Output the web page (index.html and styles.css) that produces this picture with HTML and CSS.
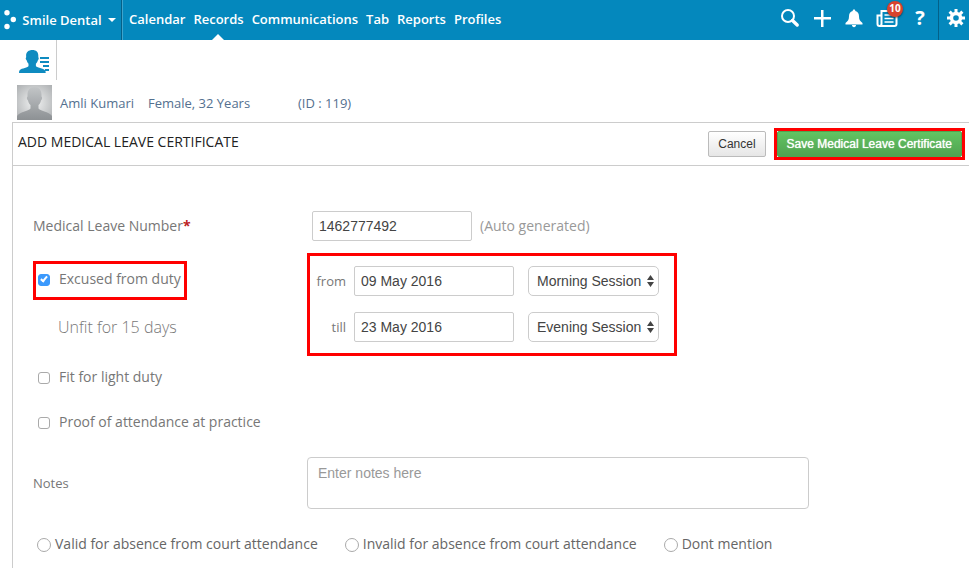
FILE: index.html
```html
<!DOCTYPE html>
<html lang="en">
<head>
  <meta charset="UTF-8" />
  <meta name="viewport" content="width=device-width, initial-scale=1" />
  <title>Add Medical Leave Certificate</title>
  <link rel="stylesheet" href="styles.css">
</head>
<body>
  <header class="topbar">
    <button type="button" class="brand">
      <svg class="brand-dots" width="12" height="20" viewBox="0 0 12 20" fill="#fff">
        <circle cx="3" cy="2.700" r="2.700" />
        <circle cx="9.300" cy="9.500" r="2.700" />
        <circle cx="3" cy="16.500" r="2.700" />
      </svg>
      <span>Smile Dental</span>
      <svg width="8" height="4" viewBox="0 0 8 4" fill="#fff"><path d="M0 0h8L4 4z" /></svg>
    </button>

    <nav class="menu">
      <a href="#">Calendar</a>
      <a href="#" class="active">Records</a>
      <a href="#">Communications</a>
      <a href="#">Tab</a>
      <a href="#">Reports</a>
      <a href="#">Profiles</a>
    </nav>

    <div class="tools">
      <button type="button" aria-label="Search">
        <svg width="20" height="20" viewBox="0 0 20 20" fill="none" stroke="#fff">
          <circle cx="8" cy="8" r="6" stroke-width="2" />
          <path d="M12.500 12.500l4.700 4.500" stroke-width="3.400" stroke-linecap="round" />
        </svg>
      </button>
      <button type="button" aria-label="Add">
        <svg width="20" height="20" viewBox="0 0 20 20" fill="#fff"><path d="M9 2h2.500v7H19v2.500h-7.500V19H9v-7.500H2V9h7z" /></svg>
      </button>
      <button type="button" aria-label="Alerts">
        <svg width="20" height="20" viewBox="0 0 20 20" fill="#fff">
          <path d="M10 1.500c.8 0 1.300.500 1.300 1.400C14 3.600 15 5.600 15 8.200c0 3.400 1 4.800 3.500 6.800v1.500h-17V15C4 13 5 11.600 5 8.200c0-2.600 1-4.600 3.700-5.300 0-.9.500-1.400 1.300-1.400z" />
          <path d="M8 17h4c0 1.300-.8 2.200-2 2.200s-2-.9-2-2.200z" />
        </svg>
      </button>
      <button type="button" class="news" aria-label="News">
        <svg width="22" height="20" viewBox="0 0 22 20" fill="none" stroke="#fff" stroke-width="2">
          <path d="M5.500 16V3h15v13a2 2 0 0 1-2 2h-15a2 2 0 0 1-2-2V7.500h4V16a2 2 0 0 1-2 2" />
          <path d="M8.500 7h9M8.500 10.500h9M8.500 14h9" stroke-width="1.700" />
        </svg>
        <span class="badge">10</span>
      </button>
      <button type="button" class="help" aria-label="Help">?</button>
    </div>

    <button type="button" class="settings" aria-label="Settings">
      <svg width="20" height="20" viewBox="0 0 20 20" fill="none" stroke="#fff">
        <circle cx="10" cy="10" r="4.500" stroke-width="3.400" />
        <path d="M10 1v4M10 15v4M1 10h4M15 10h4M3.600 3.600l3 3M13.400 13.400l3 3M3.600 16.400l3-3M13.400 6.600l3-3" stroke-width="3" />
      </svg>
    </button>
  </header>

  <div class="tabs">
    <a href="#" class="tab" aria-label="Patient details">
      <svg width="30" height="24" viewBox="0 0 30 24" fill="#0f8bc0">
        <path d="M13.500 0c3.800 0 5.800 2.200 5.800 5.500 0 .8 0 1.200.1 2 .6.600.4 2-.5 2.700-.4 1.600-1.100 2.700-2 3.500v2.300c0 1.200 8 2.500 9.300 4.500.4.700.5 1.600.5 2.500H0c0-1.200.2-2.300.8-3 1.700-1.700 8.700-2.500 8.700-4v-2.300c-.9-.8-1.500-2-1.900-3.500-.9-.7-1.200-2.200-.500-2.700.2-.8 0-1.200 0-2C7.100 2.200 9.500 0 13.500 0z" />
        <path d="M21 7h9v2h-9zM21 11h9v2h-9zM24 15h6v2h-6zM26 19h4v2h-4z" />
      </svg>
    </a>
  </div>

  <div class="patient">
    <svg class="avatar" width="35" height="35" viewBox="0 0 35 35">
      <defs>
        <radialGradient id="back" cx="50%" cy="50%" r="70%">
          <stop offset="0" stop-color="#f2f3f3" />
          <stop offset="1" stop-color="#adb0b2" />
        </radialGradient>
        <linearGradient id="person" x1="0" y1="0" x2="0" y2="1">
          <stop offset="0" stop-color="#c2c5c7" />
          <stop offset="1" stop-color="#8d9194" />
        </linearGradient>
      </defs>
      <path fill="url(#back)" d="M0 0h35v35H0z" />
      <path fill="url(#person)" d="M17.500 2c4.500 0 7 3 7 7.500v2c1 .5.800 3-.5 4-.5 2-1.300 3.500-2.500 4.500v3.500c1 2.500 10.500 3 13.500 7.500v4H0v-4c3-4.500 12.500-5 13.500-7.500V20c-1.200-1-2-2.500-2.500-4.500-1.300-1-1.500-3.500-.5-4v-2c0-4.500 2.500-7.500 7-7.500z" />
    </svg>
    <span class="patient-name">Amli Kumari</span>
    <span class="patient-info">Female, 32 Years</span>
    <span>(ID : 119)</span>
  </div>

  <form class="panel">
    <div class="panel-head">
      <h1>ADD MEDICAL LEAVE CERTIFICATE</h1>
      <button type="button" class="btn">Cancel</button>
      <div class="marked">
        <button type="submit" class="btn btn-save">Save Medical Leave Certificate</button>
      </div>
    </div>

    <div class="fields">
      <div class="row">
        <label for="number">Medical Leave Number<b class="required">*</b></label>
        <div class="number">
          <input type="text" id="number" class="text" value="1462777492">
          <span class="hint">(Auto generated)</span>
        </div>
      </div>

      <div class="row duty">
        <div class="duty-left">
          <label class="check marked"><input type="checkbox" checked> Excused from duty</label>
          <p class="unfit">Unfit for 15 days</p>
        </div>
        <div class="dates marked">
          <label for="from">from</label>
          <input type="text" id="from" class="text" value="09 May 2016">
          <div class="select">
            <select aria-label="From session">
              <option>Morning Session</option>
              <option>Evening Session</option>
            </select>
            <svg width="7" height="12" viewBox="0 0 7 12" fill="#444"><path d="M3.500 0L7 5H0zM3.500 12L0 7h7z" /></svg>
          </div>
          <label for="till">till</label>
          <input type="text" id="till" class="text" value="23 May 2016">
          <div class="select">
            <select aria-label="Till session">
              <option>Evening Session</option>
              <option>Morning Session</option>
            </select>
            <svg width="7" height="12" viewBox="0 0 7 12" fill="#444"><path d="M3.500 0L7 5H0zM3.500 12L0 7h7z" /></svg>
          </div>
        </div>
      </div>

      <div class="checks">
        <label class="check"><input type="checkbox"> Fit for light duty</label>
        <label class="check"><input type="checkbox"> Proof of attendance at practice</label>
      </div>

      <div class="row">
        <label for="notes" class="notes-label">Notes</label>
        <textarea id="notes" placeholder="Enter notes here"></textarea>
      </div>

      <div class="radios">
        <label><input type="radio" name="court"> Valid for absence from court attendance</label>
        <label><input type="radio" name="court"> Invalid for absence from court attendance</label>
        <label><input type="radio" name="court"> Dont mention</label>
      </div>
    </div>
  </form>
</body>
</html>
```

FILE: styles.css
```css
* {
  box-sizing: border-box;
}

body {
  margin: 0;
  min-height: 100vh;
  display: flex;
  flex-direction: column;
  background: #fff;
  color: #777;
  font-family: "Open Sans", sans-serif;
  font-size: 14px;
  line-height: 20px;
}

svg {
  display: block;
  flex: none;
}

button,
input,
select,
textarea {
  margin: 0;
  font-family: "Liberation Sans", Arial, sans-serif;
}

/* top bar */
.topbar {
  display: flex;
  height: 40px;
  background: #0488bd;
  color: #fff;
  font-size: 13px;
  font-weight: 600;
}

.topbar button {
  display: flex;
  align-items: center;
  justify-content: center;
  padding: 0;
  border: 0;
  background: none;
  color: #fff;
  font: inherit;
  cursor: pointer;
}

.topbar .brand {
  gap: 6px;
  width: 122px;
  padding-right: 1px;
  border-right: 1px solid #046088;
}

.menu {
  display: flex;
  gap: 8px;
  padding-left: 6px;
  border-left: 1px solid #3fa4cc;
}

.menu a {
  position: relative;
  line-height: 39px;
  color: #fff;
  text-decoration: none;
}

.menu .active::after {
  content: "";
  position: absolute;
  bottom: 0;
  left: 50%;
  margin-left: -7px;
  border: 6px solid transparent;
  border-top: 0;
  border-bottom-color: #fff;
}

.tools {
  display: flex;
  gap: 12px;
  margin-left: auto;
  padding-right: 8px;
  padding-bottom: 4px;
}

.topbar .news {
  position: relative;
}

.badge {
  position: absolute;
  top: 1px;
  right: -5px;
  width: 16px;
  height: 16px;
  border-radius: 8px;
  background: #d8432e;
  box-shadow: 0 1px 2px rgba(0, 0, 0, 0.5);
  font-size: 10px;
  font-weight: 700;
  line-height: 15px;
}

.topbar .help {
  width: 20px;
  font-size: 20px;
  font-weight: 700;
}

.topbar .settings {
  width: 31px;
  padding: 0 0 4px 4px;
  border-left: 1px solid #046088;
}

/* patient */
.tabs {
  display: flex;
  height: 40px;
}

.tab {
  display: flex;
  align-items: center;
  width: 57px;
  padding: 4px 0 0 19px;
  border-right: 1px solid #ccc;
}

.patient {
  display: flex;
  align-items: center;
  padding: 5px 17px 2px;
  color: #54708f;
  font-size: 13px;
}

.patient-name {
  margin: 0 14px 0 8px;
}

.patient-info {
  width: 150px;
}

/* form */
.panel {
  flex: 1;
  margin-left: 12px;
  border: 1px solid #ccc;
  border-width: 1px 0 0 1px;
}

.panel-head {
  display: flex;
  align-items: center;
  gap: 8px;
  height: 43px;
  padding: 0 4px 0 5px;
  border-bottom: 1px solid #ccc;
}

.panel-head h1 {
  margin: 0 auto 4px 0;
  color: #222;
  font-size: 14px;
  font-weight: 400;
}

.marked {
  border: 3px solid #f00;
}

.btn {
  display: block;
  height: 26px;
  padding: 0 9px;
  border: 1px solid #bbb;
  border-radius: 2px;
  background: linear-gradient(#fff, #e6e6e6);
  color: #333;
  font-size: 12px;
  cursor: pointer;
}

.btn-save {
  border-color: #51a351;
  background: linear-gradient(#62c462, #51a351);
  color: #fff;
  text-shadow: 0 0 1px #fff;
}

.fields {
  padding: 45px 20px 10px;
}

.row {
  display: grid;
  grid-template-columns: 274px 1fr;
  align-items: center;
}

.required {
  color: #b22;
}

.number {
  display: flex;
  align-items: center;
  gap: 8px;
  padding-left: 5px;
}

.text {
  width: 160px;
  height: 30px;
  padding: 0 6px;
  border: 1px solid #ccc;
  border-radius: 2px;
  color: #444;
  font-size: 14px;
}

.hint {
  color: #999;
}

.duty {
  align-items: start;
  margin-top: 12px;
}

.duty-left {
  display: flex;
  flex-direction: column;
  align-items: flex-start;
  padding-top: 8px;
}

.check {
  display: flex;
  align-items: center;
  gap: 9px;
  padding-left: 5px;
}

.check.marked {
  height: 39px;
  padding: 0 3px 4px 2px;
}

.check input,
.radios input {
  position: relative;
  appearance: none;
  flex: none;
  width: 12px;
  height: 12px;
  margin-top: 2px;
  border: 1px solid #aaa;
  border-radius: 3px;
  background: #fff;
}

.check input:checked {
  border-color: #3b99fc;
  background: #3b99fc;
}

.check input:checked::after {
  content: "";
  position: absolute;
  top: 0;
  left: 3px;
  width: 2px;
  height: 5px;
  border: solid #fff;
  border-width: 0 2px 2px 0;
  transform: rotate(40deg);
}

.unfit {
  margin: 17px 0 0 25px;
  font-size: 16px;
  font-weight: 300;
}

.dates {
  display: grid;
  grid-template-columns: 36px 160px 137px;
  gap: 16px 8px;
  align-items: center;
  justify-self: start;
  padding: 10px 15px 11px 0;
}

.dates label {
  font-size: 13px;
  text-align: right;
}

.select {
  position: relative;
  margin-left: 6px;
}

.select select {
  appearance: none;
  display: block;
  width: 100%;
  height: 30px;
  padding: 0 8px;
  border: 1px solid #ccc;
  border-radius: 5px;
  background: #fff;
  color: #444;
  font-size: 14px;
}

.select svg {
  position: absolute;
  top: 9px;
  right: 5px;
  pointer-events: none;
}

.checks {
  display: grid;
  gap: 25px;
  padding: 11px 0 25px;
}

.notes-label {
  font-size: 13px;
}

textarea {
  display: block;
  width: 502px;
  max-width: 100%;
  height: 52px;
  padding: 7px 10px;
  border: 1px solid #ccc;
  border-radius: 4px;
  color: #444;
  font-size: 14px;
  resize: none;
}

textarea::placeholder {
  color: #999;
}

.radios {
  display: flex;
  flex-wrap: wrap;
  gap: 10px 27px;
  margin-top: 25px;
  padding-left: 4px;
  color: #666;
}

.radios label {
  display: flex;
  align-items: center;
  gap: 4px;
}

.radios input {
  width: 14px;
  height: 14px;
  border-radius: 50%;
}

.radios input:checked {
  border: 4px solid #3b99fc;
}
```
